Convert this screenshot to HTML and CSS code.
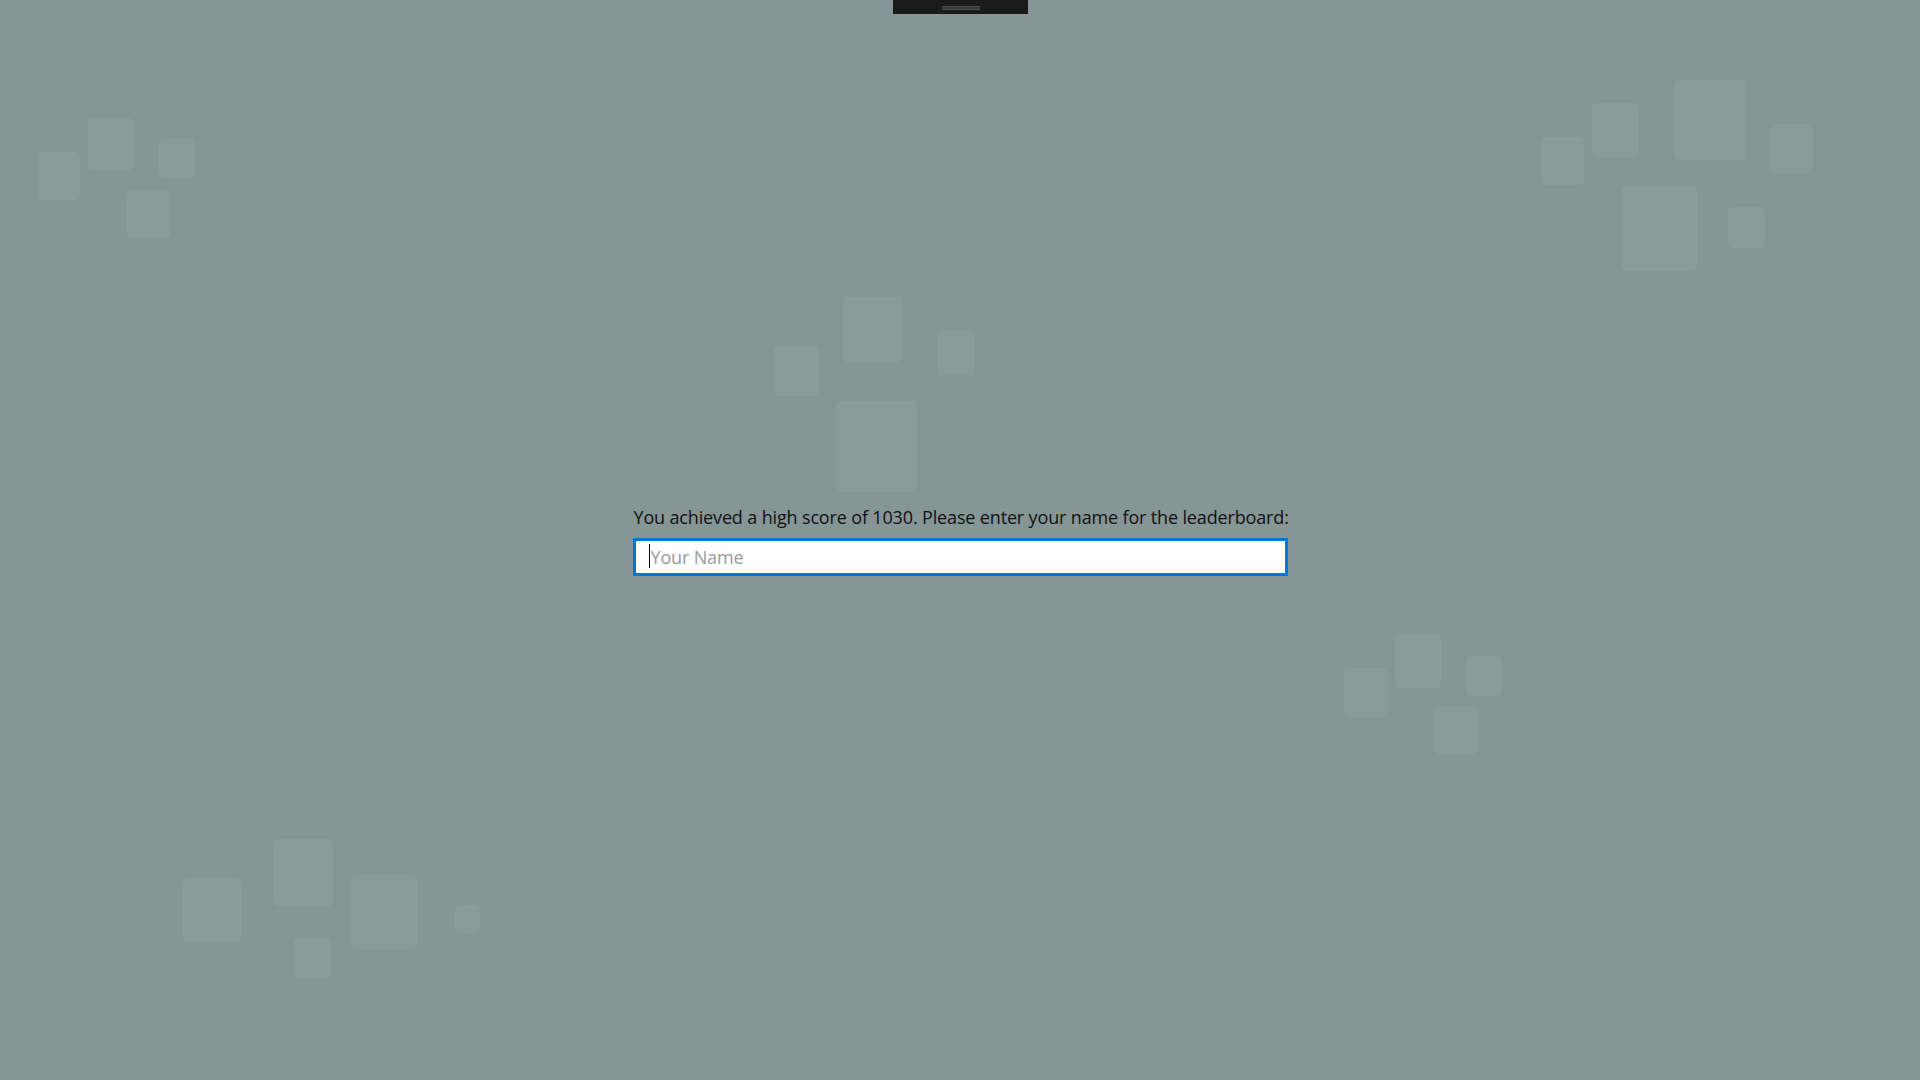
FILE: index.html
```html
<!DOCTYPE html>
<html lang="en">
<head>
<meta charset="utf-8">
<title>High Score</title>
<link rel="stylesheet" href="styles.css">
</head>
<body>
<svg class="backdrop" width="1920" height="1080" viewBox="0 0 1920 1080" aria-hidden="true">
  <g class="tiles">
    <rect x="38" y="152" width="42" height="48" rx="5"/>
    <rect x="88" y="118" width="46" height="53" rx="5"/>
    <rect x="159" y="139" width="36" height="40" rx="5"/>
    <rect x="127" y="190" width="43" height="48" rx="5"/>
    <rect x="1541" y="137" width="43" height="48" rx="5"/>
    <rect x="1592" y="103" width="47" height="54" rx="5"/>
    <rect x="1674" y="80" width="72" height="80" rx="5"/>
    <rect x="1770" y="124" width="43" height="49" rx="5"/>
    <rect x="1622" y="186" width="75" height="85" rx="5"/>
    <rect x="1728" y="207" width="37" height="41" rx="5"/>
    <rect x="774" y="346" width="45" height="50" rx="5"/>
    <rect x="843" y="297" width="59" height="66" rx="5"/>
    <rect x="937" y="331" width="38" height="43" rx="5"/>
    <rect x="836" y="401" width="81" height="91" rx="5"/>
    <rect x="1344" y="668" width="44" height="49" rx="5"/>
    <rect x="1395" y="634" width="46" height="54" rx="5"/>
    <rect x="1466" y="656" width="36" height="40" rx="5"/>
    <rect x="1434" y="707" width="44" height="48" rx="5"/>
    <rect x="183" y="877" width="58" height="65" rx="5"/>
    <rect x="273" y="839" width="60" height="68" rx="5"/>
    <rect x="350" y="875" width="67" height="74" rx="5"/>
    <rect x="294" y="938" width="37" height="41" rx="5"/>
    <rect x="455" y="905" width="25" height="28" rx="5"/>
  </g>
</svg>

<div class="titlebar"><span class="grip"></span></div>

<main class="stage">
  <form class="entry" onsubmit="return false;">
    <label class="prompt" for="playerName">You achieved a high score of 1030. Please enter your name for the leaderboard:</label>
    <span class="field">
      <input class="name-input" id="playerName" type="text" placeholder="Your Name" autofocus autocomplete="off">
    </span>
  </form>
</main>
</body>
</html>
```

FILE: styles.css
```css
html, body {
  margin: 0;
  padding: 0;
  width: 100%;
  height: 100%;
  overflow: hidden;
}

body {
  background: #869595;
  font-family: "Open Sans", "Segoe UI", "Liberation Sans", sans-serif;
  color: #111;
  position: relative;
}

.backdrop {
  position: absolute;
  left: 0;
  top: 0;
  z-index: 0;
}

.tiles rect {
  fill: #8b9b9b;
}

.titlebar {
  position: absolute;
  top: 0;
  left: 893px;
  width: 135px;
  height: 14px;
  background: #1b1b1b;
  display: flex;
  justify-content: center;
  align-items: flex-start;
  z-index: 2;
}

.grip {
  margin-top: 6px;
  width: 38px;
  height: 4px;
  background: linear-gradient(#4d4d4d 0 1px, #3a3a3a 1px 3px, #4d4d4d 3px 4px);
}

.stage {
  position: relative;
  z-index: 1;
  height: 100%;
  display: flex;
  align-items: center;
  justify-content: center;
}

.entry {
  display: flex;
  flex-direction: column;
  width: 655px;
  margin: 0;
  padding-top: 1px;
}

.prompt {
  font-size: 18px;
  line-height: 24px;
  letter-spacing: -0.15px;
  padding-left: 1px;
  white-space: nowrap;
  margin-bottom: 9px;
}

.field {
  position: relative;
  display: block;
  width: 655px;
  height: 38px;
}

.field::after {
  content: "";
  position: absolute;
  left: 16px;
  top: 6px;
  width: 1px;
  height: 24px;
  background: #000;
  pointer-events: none;
}

.name-input {
  box-sizing: border-box;
  display: block;
  width: 655px;
  height: 38px;
  margin: 0;
  padding: 0 8px 0 15px;
  border: 3px solid #0078d7;
  border-radius: 0;
  background: #fff;
  font-family: inherit;
  font-size: 18px;
  letter-spacing: -0.15px;
  color: #111;
  caret-color: transparent;
  outline: none;
}

.name-input::placeholder {
  color: #9a9a9a;
  opacity: 1;
}
```
